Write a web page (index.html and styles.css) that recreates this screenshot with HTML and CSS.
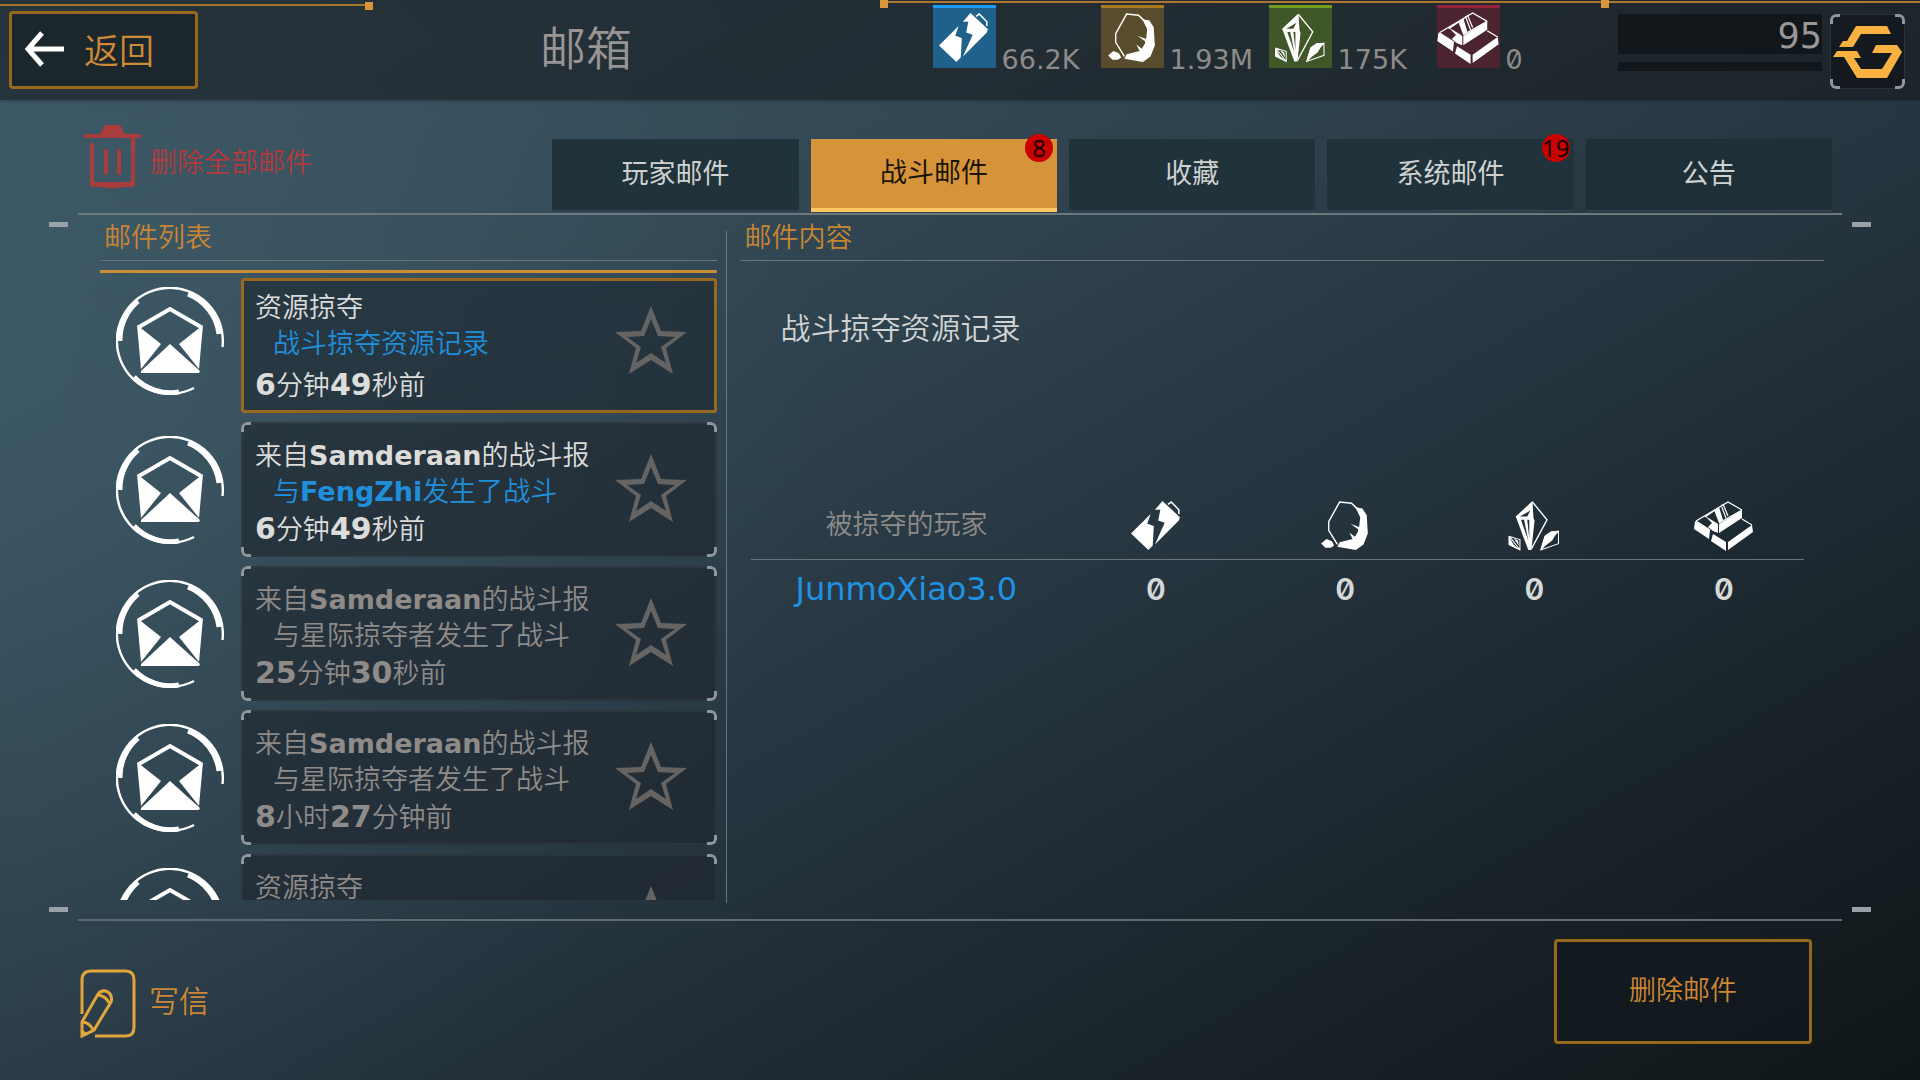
FILE: index.html
```html
<!DOCTYPE html>
<html lang="zh-CN">
<head>
<meta charset="utf-8">
<title>邮箱</title>
<link rel="stylesheet" href="styles.css">
</head>
<body>
<svg class="defs" aria-hidden="true">
  <symbol id="energy" viewBox="0 0 46 46">
    <path fill="#fff" d="M0 30 18 12 15 21 21 23 20 41 16 45ZM29 0 45 15 44 18 22 40 31 20 25 18 27 8 22 8Z"/>
    <path fill="none" stroke="#fff" stroke-width="1.4" d="M34 3 37 1 44 8 44 12"/>
  </symbol>
  <symbol id="rock" viewBox="0 0 44 46">
    <path fill="none" stroke="#fff" stroke-width="1.3" d="M15 40 7 27V19L17 1 28 2 33 7"/>
    <path fill="#fff" d="M28 2 33 6 38 7 42 13 43 30 39 40 32 45 15 42 17 38 29 35 26 29 31 33 34 28 34 26 27 21 35 24 36 15 32 7ZM0 39 5 35 10 37 12 41 9 43H4Z"/>
  </symbol>
  <symbol id="crystal" viewBox="0 0 49 48">
    <path fill="none" stroke="#fff" stroke-width="1.3" d="M23 1 37 18 22 46"/>
    <path fill="#fff" fill-rule="evenodd" d="M23 0 7 15 19 47H22L25 19 24 16ZM11 15 21 9 18 15ZM12 18 15 18 19 38ZM18 18H20L20 36Z"/>
    <path fill="none" stroke="#fff" stroke-width="1" d="M1 34 11 37 11 47 1 42ZM35 34 41 30 48 29V41L31 47ZM1 34 11 47M48 29 31 47"/>
    <path fill="#fff" d="M0 33 5 42 11 47 0 42ZM41 29 47 29 42 38 31 46 35 33ZM5 36 9 38 10 43Z"/>
  </symbol>
  <symbol id="gold" viewBox="0 0 60 50">
    <path fill="none" stroke="#fff" stroke-width="1.2" d="M2 20 34 1 48 9M11 16 30 3M25 22 48 9M48 18 58 24M2 20 16 29M27 4 32 17M29 3 34 15"/>
    <path fill="#fff" d="M48 9V17L25 32V23ZM1 20 16 29 15 38 0 28ZM11 15 21 21 24 23V32L19 30 14 26 18 22ZM20 9 25 6 29 19 25 22ZM19 33 32 41V50L17 40ZM34 41 58 24 59 31 34 49Z"/>
  </symbol>
  <symbol id="mail" viewBox="0 0 108 108">
    <g fill="none" stroke="#fff">
      <path stroke-width="2.4" d="M106.500 60A53 53 0 1 0 78 101"/>
      <path stroke-width="5" d="M72 7A50 50 0 0 1 103 47M22 14A51 51 0 0 0 4 54M18 90A51 51 0 0 0 63 105"/>
      <path stroke-width="4" d="M23 40 54 22 85 40"/>
    </g>
    <path fill="#fff" d="M21 38 45 57 25 82ZM87 38 63 57 83 82ZM54 57 84 84 83 86H25L25 84Z"/>
  </symbol>
  <symbol id="star" viewBox="0 0 72 68">
    <path fill="#666462" fill-rule="evenodd" d="M36 0 46 25 72 26 51 42 58 68 36 54 14 68 21 42 0 26 26 25ZM36 13 29 30 12 31 26 41 21 57 36 47 51 57 46 41 60 31 43 30Z"/>
  </symbol>
</svg>

<header class="topbar">
  <div class="topbar-start">
    <button class="back" type="button">
      <svg class="back-arrow" viewBox="0 0 42 36" aria-hidden="true"><path fill="none" stroke="#fff" stroke-width="5" d="M18 2 4 18 18 34M4 18H40"/></svg>
      返回
    </button>
    <h1 class="title">邮箱</h1>
  </div>
  <ul class="resources">
    <li class="resource"><span class="tile tile-energy"><svg class="tile-icon" aria-hidden="true"><use href="#energy"/></svg></span><span class="amount">66.2K</span></li>
    <li class="resource"><span class="tile tile-rock"><svg class="tile-icon" aria-hidden="true"><use href="#rock"/></svg></span><span class="amount">1.93M</span></li>
    <li class="resource"><span class="tile tile-crystal"><svg class="tile-icon" aria-hidden="true"><use href="#crystal"/></svg></span><span class="amount">175K</span></li>
    <li class="resource"><span class="tile tile-gold"><svg class="tile-icon tile-icon-wide" aria-hidden="true"><use href="#gold"/></svg></span><span class="amount zero">0</span></li>
  </ul>
  <div class="level">
    <div class="level-bars">
      <div class="level-value">95</div>
      <div class="level-progress"></div>
    </div>
    <div class="emblem brackets">
      <svg class="emblem-icon" viewBox="0 0 75 75" aria-hidden="true"><path fill="#f9b23f" d="M26 12H57L61 20H31L23 33H9L13 27H17ZM7 37H27L31 44H24L31 55H52L62 39H42L46 31H67L72 38 57 64H27L14 43H3Z"/></svg>
    </div>
  </div>
</header>

<main class="mailbox">
  <div class="toolbar">
    <button class="delete-all" type="button">
      <svg class="trash" viewBox="0 0 57 63" aria-hidden="true">
        <path fill="#a93c3c" d="M21 0H36L41 9H57V13H51V60L49 62H38L37 63H21L20 62H7L6 60V18H10V57H47V14L45 13H0V9H16Z"/>
        <path stroke="#a93c3c" stroke-width="4" stroke-linecap="round" d="M22 26V48M35 26V48"/>
      </svg>
      删除全部邮件
    </button>
    <nav class="tabs">
      <button class="tab" type="button">玩家邮件</button>
      <button class="tab tab-active" type="button">战斗邮件<span class="badge">8</span></button>
      <button class="tab" type="button">收藏</button>
      <button class="tab" type="button">系统邮件<span class="badge">19</span></button>
      <button class="tab" type="button">公告</button>
    </nav>
  </div>

  <div class="panels">
    <section class="inbox">
      <h2 class="panel-title">邮件列表</h2>
      <div class="accent"></div>
      <ul class="mails">
        <li class="mail mail-selected">
          <svg class="mail-icon" aria-hidden="true"><use href="#mail"/></svg>
          <article class="card">
            <div class="card-text">
              <p>资源掠夺</p>
              <p class="subject">战斗掠夺资源记录</p>
              <p class="time"><b>6</b>分钟<b>49</b>秒前</p>
            </div>
            <button class="fav" type="button" aria-label="收藏"><svg class="fav-icon"><use href="#star"/></svg></button>
          </article>
        </li>
        <li class="mail mail-unread">
          <svg class="mail-icon" aria-hidden="true"><use href="#mail"/></svg>
          <article class="card brackets">
            <div class="card-text">
              <p>来自<b>Samderaan</b>的战斗报</p>
              <p class="subject">与<b>FengZhi</b>发生了战斗</p>
              <p class="time"><b>6</b>分钟<b>49</b>秒前</p>
            </div>
            <button class="fav" type="button" aria-label="收藏"><svg class="fav-icon"><use href="#star"/></svg></button>
          </article>
        </li>
        <li class="mail">
          <svg class="mail-icon" aria-hidden="true"><use href="#mail"/></svg>
          <article class="card brackets">
            <div class="card-text">
              <p>来自<b>Samderaan</b>的战斗报</p>
              <p class="subject">与星际掠夺者发生了战斗</p>
              <p class="time"><b>25</b>分钟<b>30</b>秒前</p>
            </div>
            <button class="fav" type="button" aria-label="收藏"><svg class="fav-icon"><use href="#star"/></svg></button>
          </article>
        </li>
        <li class="mail">
          <svg class="mail-icon" aria-hidden="true"><use href="#mail"/></svg>
          <article class="card brackets">
            <div class="card-text">
              <p>来自<b>Samderaan</b>的战斗报</p>
              <p class="subject">与星际掠夺者发生了战斗</p>
              <p class="time"><b>8</b>小时<b>27</b>分钟前</p>
            </div>
            <button class="fav" type="button" aria-label="收藏"><svg class="fav-icon"><use href="#star"/></svg></button>
          </article>
        </li>
        <li class="mail">
          <svg class="mail-icon" aria-hidden="true"><use href="#mail"/></svg>
          <article class="card brackets">
            <div class="card-text">
              <p>资源掠夺</p>
            </div>
            <button class="fav" type="button" aria-label="收藏"><svg class="fav-icon"><use href="#star"/></svg></button>
          </article>
        </li>
      </ul>
    </section>
    <div class="divider"></div>
    <section class="reader">
      <h2 class="panel-title">邮件内容</h2>
      <div class="message">
        <h3 class="message-title">战斗掠夺资源记录</h3>
        <table class="loot">
          <thead>
            <tr>
              <th class="player-col" scope="col">被掠夺的玩家</th>
              <th scope="col"><svg class="loot-icon" aria-label="能量"><use href="#energy"/></svg></th>
              <th scope="col"><svg class="loot-icon" aria-label="矿石"><use href="#rock"/></svg></th>
              <th scope="col"><svg class="loot-icon" aria-label="水晶"><use href="#crystal"/></svg></th>
              <th class="last-col" scope="col"><svg class="loot-icon" aria-label="黄金"><use href="#gold"/></svg></th>
            </tr>
          </thead>
          <tbody>
            <tr>
              <td><a class="player" href="#">JunmoXiao3.0</a></td>
              <td class="zero">0</td>
              <td class="zero">0</td>
              <td class="zero">0</td>
              <td class="zero last-col">0</td>
            </tr>
          </tbody>
        </table>
      </div>
    </section>
  </div>
</main>

<footer class="actions">
  <button class="compose" type="button">
    <svg class="compose-icon" viewBox="0 0 56 69" aria-hidden="true">
      <g fill="none" stroke="#e3a63b" stroke-width="3">
        <path d="M2 45V11Q2 2 11 2H46Q54 2 54 11V58Q54 67 46 67H15"/>
        <path d="M2 53 18 25Q22 20 28 23 33 27 31 33L14 61 2 67ZM18 26Q26 27 29 34M3 53Q10 54 13 61"/>
      </g>
      <path fill="#e3a63b" d="M1 60 7 64 1 69Z"/>
    </svg>
    写信
  </button>
  <button class="delete" type="button">删除邮件</button>
</footer>
</body>
</html>
```

FILE: styles.css
```css
* {
  box-sizing: border-box;
}

body {
  margin: 0;
  height: 100vh;
  min-height: 720px;
  display: flex;
  flex-direction: column;
  font-family: "Noto Sans CJK SC", sans-serif;
  font-weight: 350;
  font-size: 27px;
  line-height: 36px;
  color: #8e8b89;
  background:
    radial-gradient(circle at 0 35%, rgba(74, 108, 122, 0.35), transparent 40%),
    linear-gradient(to bottom right, #3a5461 0%, #344b57 25%, #283843 52%, #1a242b 78%, #0f1618 100%);
}

h1, h2, h3, p, ul {
  margin: 0;
  padding: 0;
  font-size: inherit;
  font-weight: inherit;
}

ul {
  list-style: none;
}

button {
  padding: 0;
  border: 0;
  background: none;
  font: inherit;
  color: inherit;
  cursor: pointer;
}

svg {
  display: block;
  flex: none;
}

b {
  font-family: "DejaVu Sans", sans-serif;
  font-weight: 700;
  line-height: 1;
}

.defs {
  position: absolute;
  width: 0;
  height: 0;
}

.brackets {
  position: relative;
}

.brackets::before {
  content: "";
  position: absolute;
  inset: 0;
  border: 3px solid #8f979c;
  border-radius: 6px;
  pointer-events: none;
  mask:
    linear-gradient(#000 0 0) left top / 10px 10px no-repeat,
    linear-gradient(#000 0 0) right top / 10px 10px no-repeat,
    linear-gradient(#000 0 0) left bottom / 10px 10px no-repeat,
    linear-gradient(#000 0 0) right bottom / 10px 10px no-repeat;
}

/* Top bar */

.topbar {
  position: relative;
  flex: none;
  height: 100px;
  display: flex;
  align-items: flex-start;
  background: rgba(22, 23, 26, 0.56);
  box-shadow: 0 0 4px rgba(20, 24, 28, 0.6);
}

/* amber rails with square end caps along the upper edge */
.topbar::before,
.topbar::after {
  content: "";
  position: absolute;
  height: 8px;
}

.topbar::before {
  top: 2px;
  left: 0;
  width: 373px;
  background:
    linear-gradient(#d8953a 0 0) right top / 8px 8px no-repeat,
    linear-gradient(#a8752f 0 0) left 2px / 100% 2px no-repeat;
}

.topbar::after {
  top: 0;
  left: 880px;
  right: 0;
  background:
    linear-gradient(#d8953a 0 0) left top / 8px 8px no-repeat,
    linear-gradient(#d8953a 0 0) 721px top / 8px 8px no-repeat,
    linear-gradient(#b0762f 0 0) left 1px / 100% 2px no-repeat;
}

.topbar-start {
  width: 48%;
  padding: 11px 0 0 9px;
  display: flex;
}

.back {
  width: 189px;
  height: 78px;
  padding: 0 0 2px 12px;
  display: flex;
  align-items: center;
  gap: 18px;
  border: 3px solid #98681b;
  border-radius: 4px;
  background: rgba(20, 30, 36, 0.6);
  font-size: 35px;
  color: #cf8a35;
}

.back-arrow {
  width: 42px;
  height: 36px;
}

.title {
  margin-left: 342px;
  font-size: 46px;
  line-height: 68px;
  color: #989594;
}

.resources {
  display: flex;
  padding: 5px 0 0 11px;
}

.resource {
  width: 168px;
  display: flex;
  align-items: flex-start;
  gap: 6px;
}

.tile {
  width: 63px;
  height: 63px;
  display: flex;
  align-items: center;
  justify-content: center;
  border-top: 3px solid;
}

.tile-energy { background: #20618c; border-color: #1e9bf5; }
.tile-rock { background: #584c2d; border-color: #a87a1c; }
.tile-crystal { background: #405728; border-color: #6f9e1f; }
.tile-gold { background: #4b2430; border-color: #94203c; }

.tile-icon {
  width: 50px;
  height: 50px;
}

.tile-icon-wide {
  width: 63px;
  height: 52px;
}

.amount {
  padding-top: 41px;
  font-family: "DejaVu Sans", sans-serif;
  font-weight: 400;
  font-size: 27px;
  line-height: 27px;
}

.zero {
  font-family: "Inter", sans-serif;
  font-variant-numeric: slashed-zero;
}

.level {
  margin-left: auto;
  padding: 14px 15px 0 0;
  display: flex;
  gap: 8px;
}

.level-bars {
  width: 204px;
  display: flex;
  flex-direction: column;
  gap: 8px;
}

.level-value {
  height: 40px;
  background: rgba(12, 16, 18, 0.7);
  font-family: "DejaVu Sans", sans-serif;
  font-weight: 400;
  font-size: 35px;
  line-height: 44px;
  text-align: right;
  color: #9a9796;
}

.level-progress {
  height: 9px;
  background: rgba(12, 16, 18, 0.7);
}

.emblem {
  width: 75px;
  height: 75px;
  border: 1px solid #2a3236;
  border-radius: 6px;
  background: rgba(14, 18, 22, 0.6);
}

.emblem::before {
  inset: -1px;
}

.emblem-icon {
  width: 75px;
  height: 75px;
  margin: -1px;
}

/* Mailbox */

.mailbox {
  flex: 1;
  min-height: 0;
  display: flex;
  flex-direction: column;
  margin: 0 78px;
  border-bottom: 2px solid #60696d;
}

.toolbar {
  height: 115px;
  flex: none;
  padding: 0 10px 1px 6px;
  display: flex;
  align-items: flex-end;
  justify-content: space-between;
  border-bottom: 2px solid #6d787d;
}

.delete-all {
  margin-bottom: 15px;
  display: flex;
  align-items: flex-start;
  gap: 9px;
  line-height: 72px;
  color: #b23a3d;
}

.trash {
  width: 57px;
  height: 63px;
}

.tabs {
  width: 73.2%;
  height: 73px;
  display: grid;
  grid-template-columns: repeat(5, 1fr);
  gap: 12px;
}

.tab {
  position: relative;
  padding-bottom: 6px;
  border-bottom: 2px solid #333f52;
  background: #20323a;
  font-weight: 400;
  color: #cfd1d1;
}

.tab:last-child {
  background: #1f2f37;
}

.tab-active {
  border-bottom: 4px solid #fdc763;
  background: #d59439;
  color: #1b1408;
}

.badge {
  position: absolute;
  top: -5px;
  right: 4px;
  width: 28px;
  height: 28px;
  border-radius: 50%;
  background: #cb0000;
  font-family: "Noto Sans", sans-serif;
  font-size: 24px;
  line-height: 28px;
  display: flex;
  justify-content: center;
  color: #140000;
}

.panels {
  position: relative;
  flex: 1;
  min-height: 0;
  display: flex;
}

/* short dashes outside the four corners of the panel area */
.panels::before,
.panels::after {
  content: "";
  position: absolute;
  top: 7px;
  bottom: 7px;
  width: 19px;
  border: solid #98a2a7;
  border-width: 5px 0;
  pointer-events: none;
}

.panels::before { left: -29px; }
.panels::after { right: -29px; }

.panel-title {
  height: 46px;
  flex: none;
  padding-left: 4px;
  border-bottom: 1px solid #6a757a;
  line-height: 42px;
  color: #c98635;
}

.inbox {
  width: 35%;
  flex: none;
  margin: 0 0 19px 22px;
  display: flex;
  flex-direction: column;
}

.accent {
  height: 3px;
  flex: none;
  margin: 9px 0 5px;
  background: #ca8e37;
}

.mails {
  flex: 1;
  min-height: 0;
  overflow-y: auto;
  scrollbar-width: none;
}

.mail {
  height: 135px;
  margin-bottom: 9px;
  padding-left: 16px;
  display: flex;
  align-items: center;
  gap: 17px;
}

.mail-icon {
  width: 108px;
  height: 108px;
}

.card {
  flex: 1;
  height: 135px;
  padding: 14px 30px 0 14px;
  display: flex;
  justify-content: space-between;
  align-items: flex-start;
  border-radius: 6px;
  background: rgba(30, 38, 46, 0.65);
  box-shadow: inset 0 0 0 2px rgba(60, 68, 74, 0.35);
}

.subject {
  padding-left: 18px;
}

.time {
  margin-top: 2px;
}

.time b {
  font-size: 30px;
}

.fav {
  margin-top: 18px;
}

.fav-icon {
  width: 72px;
  height: 68px;
}

.mail-unread,
.mail-selected {
  color: #dcdcda;
}

.mail-unread .subject,
.mail-selected .subject {
  color: #1f8fdc;
}

.mail-selected .mail-icon {
  margin-bottom: 10px;
}

.mail-selected .card {
  padding: 7px 27px 0 11px;
  border: 3px solid #98681f;
  border-radius: 3px;
  background: rgba(28, 38, 46, 0.6);
  box-shadow: none;
}

.mail-selected .time {
  margin-top: 6px;
}

.divider {
  width: 1px;
  flex: none;
  margin: 16px 13px 16px 9px;
  background: #69757b;
}

.reader {
  flex: 1;
  min-width: 0;
  margin-right: 18px;
}

.message {
  padding: 47px 20px 0 11px;
}

.message-title {
  padding-left: 29px;
  font-size: 30px;
  color: #d2d4d4;
}

.loot {
  width: 100%;
  margin-top: 149px;
  table-layout: fixed;
  border-collapse: collapse;
  text-align: center;
}

.loot th,
.loot td {
  padding: 0;
  font-weight: inherit;
}

.loot th {
  height: 66px;
  border-bottom: 1px solid #6b7377;
}

.loot td {
  height: 60px;
}

.loot .player-col {
  width: 310px;
  padding-bottom: 6px;
}

.loot .last-col {
  width: 175px;
  padding-left: 15px;
}

.loot-icon {
  width: 60px;
  height: 50px;
  margin: 0 auto;
}

.player {
  font-family: "DejaVu Sans", sans-serif;
  font-weight: 400;
  font-size: 32px;
  text-decoration: none;
  color: #1f92e4;
}

.loot .zero {
  font-size: 30px;
  font-weight: 600;
  color: #d6d8d8;
}

/* Bottom actions */

.actions {
  flex: none;
  height: 159px;
  padding: 18px 108px 0 80px;
  display: flex;
  justify-content: space-between;
  align-items: flex-start;
  color: #cd8735;
}

.compose {
  margin-top: 30px;
  display: flex;
  gap: 13px;
  font-size: 30px;
  line-height: 60px;
}

.compose-icon {
  width: 56px;
  height: 69px;
}

.delete {
  width: 258px;
  height: 105px;
  padding-bottom: 6px;
  border: 3px solid #98681b;
  border-radius: 4px;
  background: rgba(16, 24, 30, 0.6);
}
```
